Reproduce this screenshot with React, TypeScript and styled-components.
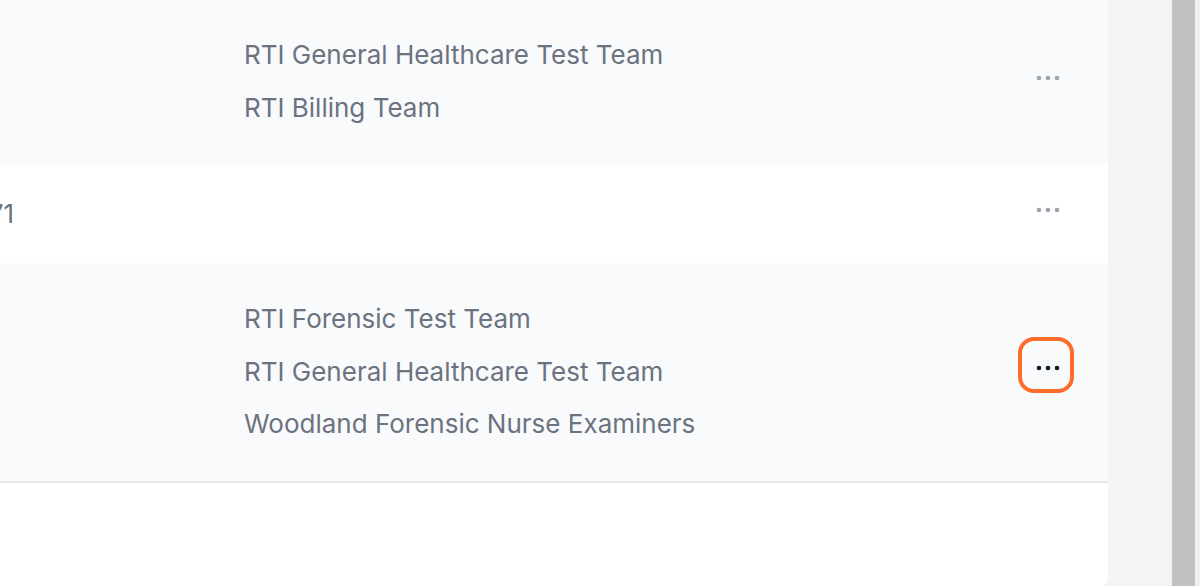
import React from "react";
import styled, { createGlobalStyle } from "styled-components";

const GlobalStyle = createGlobalStyle`
  html, body {
    margin: 0;
    padding: 0;
    height: 100%;
    overflow: hidden;
    background: #f3f4f6;
    font-family: Inter, "Noto Sans", "Liberation Sans", sans-serif;
  }
`;

type Member = {
  lead: string;
  teams: string[];
  focused?: boolean;
};

const members: Member[] = [
  {
    lead: "",
    teams: ["RTI General Healthcare Test Team", "RTI Billing Team"],
  },
  { lead: "(919) 555-0171", teams: [] },
  {
    lead: "",
    teams: [
      "RTI Forensic Test Team",
      "RTI General Healthcare Test Team",
      "Woodland Forensic Nurse Examiners",
    ],
    focused: true,
  },
];

const DotsIcon = () => (
  <svg width="26" height="6" viewBox="0 0 26 6" aria-hidden="true">
    <circle cx="4" cy="3" r="2.3" fill="currentColor" />
    <circle cx="13" cy="3" r="2.3" fill="currentColor" />
    <circle cx="22" cy="3" r="2.3" fill="currentColor" />
  </svg>
);

const App = () => {
  return (
    <>
      <GlobalStyle />
      <Page>
        <Card>
          {/* table is scrolled sideways, so the first column is mostly out of view */}
          <Table>
            {members.map((m, i) => (
              <Row key={i} $striped={i % 2 === 0} $last={i === members.length - 1}>
                <LeadCell>{m.lead}</LeadCell>
                <TeamList>
                  {m.teams.map(t => (
                    <TeamItem key={t}>{t}</TeamItem>
                  ))}
                </TeamList>
                <ActionCell>
                  <MenuButton $focused={m.focused} aria-label="More actions">
                    <DotsIcon />
                  </MenuButton>
                </ActionCell>
              </Row>
            ))}
          </Table>
          <CardFooter />
        </Card>
        <Gutter />
        <ScrollTrack>
          <ScrollThumb />
        </ScrollTrack>
      </Page>
    </>
  );
};

const Page = styled.div`
  display: flex;
  height: 586px;
  width: 1200px;
`;

const Card = styled.div`
  width: 1108px;
  flex-shrink: 0;
  margin-top: -1px;
  height: 588px;
  display: flex;
  flex-direction: column;
  background: #ffffff;
  border-radius: 0 0 10px 0;
  overflow: hidden;
`;

const Table = styled.div`
  display: flex;
  flex-direction: column;
  margin-left: -180px;
`;

const Row = styled.div<{ $striped: boolean; $last: boolean }>`
  display: grid;
  grid-template-columns: 194px 1fr auto;
  column-gap: 230px;
  align-items: center;
  min-height: 99px;
  padding-right: 38px;
  background: ${({ $striped }) => ($striped ? "#f9fafb" : "#ffffff")};
  border-bottom: ${({ $last }) => ($last ? "2px solid #e5e7eb" : "none")};
  color: #6b7280;
  font-size: 26px;
`;

const LeadCell = styled.div`
  text-align: right;
  white-space: nowrap;
  line-height: 36px;
`;

const TeamList = styled.ul`
  list-style: none;
  margin: 0;
  padding: 30px 0;
  &:empty {
    padding: 0;
  }
`;

const TeamItem = styled.li`
  line-height: 52.5px;
  white-space: nowrap;
`;

const ActionCell = styled.div`
  display: flex;
  align-items: center;
  padding-bottom: 14px;
`;

const MenuButton = styled.button<{ $focused?: boolean }>`
  width: 48px;
  height: 48px;
  display: flex;
  align-items: center;
  justify-content: center;
  padding: 6px 0 0 4px;
  border: none;
  border-radius: 12px;
  background: transparent;
  color: ${({ $focused }) => ($focused ? "#111827" : "#9ca3af")};
  outline: ${({ $focused }) => ($focused ? "4.5px solid #ff6b2c" : "none")};
  cursor: pointer;
`;

const CardFooter = styled.div`
  flex: 1;
  background: #ffffff;
`;

const Gutter = styled.div`
  flex: 1;
  background: #f3f4f6;
`;

const ScrollTrack = styled.div`
  width: 29px;
  display: flex;
  background: #f1f1f1;
  padding: 0 5px 0 1px;
  box-sizing: border-box;
`;

const ScrollThumb = styled.div`
  flex: 1;
  background: #c1c1c1;
`;

export default App;
